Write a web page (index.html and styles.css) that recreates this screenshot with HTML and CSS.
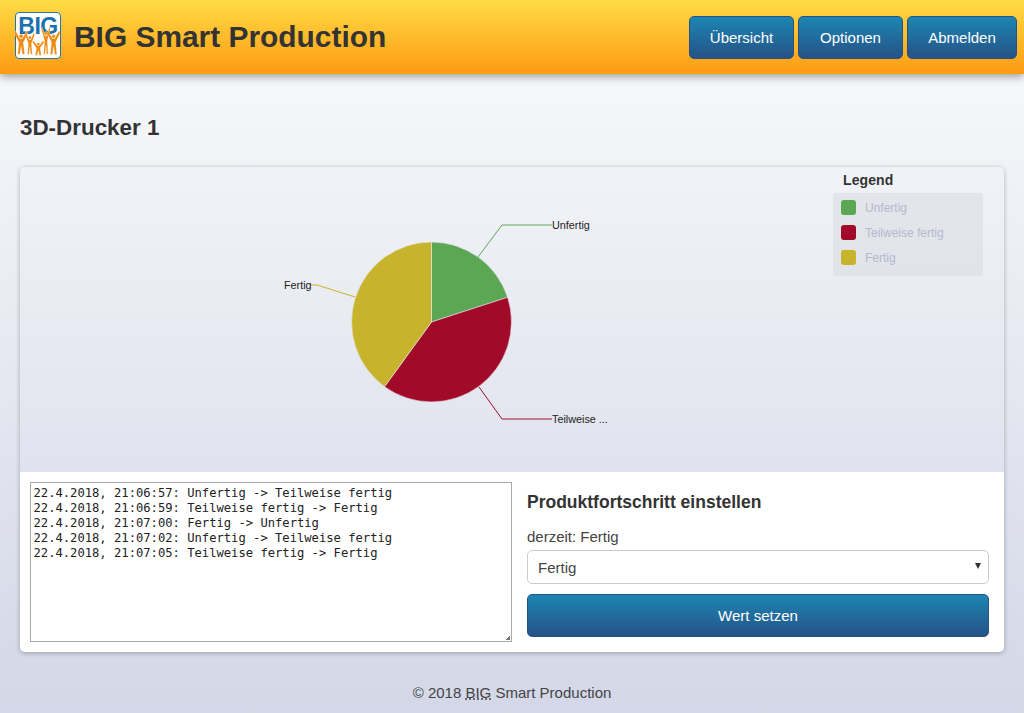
FILE: index.html
```html
<!DOCTYPE html>
<html lang="de">
<head>
    <meta charset="UTF-8">
    <title>BIG Smart Production</title>
    <link rel="stylesheet" href="styles.css">
</head>
<body>
<header class="topbar">
    <div class="brand">
        <div class="logo">
            <span class="logo-text">BIG</span>
            <svg class="logo-people" viewBox="0 0 50 34" aria-hidden="true">
                <defs>
                    <g id="person">
                        <path d="M0 3 L1.5 0 L6.5 10 L9.5 10 L14.5 0 L16 3 L10.5 15 L12 30 L9.5 30 L8 20 L6.5 30 L4 30 L5.5 15 Z"/>
                        <circle cx="8" cy="7" r="2.3"/>
                    </g>
                </defs>
                <use href="#person" transform="translate(0 4) scale(.95 .86)"/>
                <use href="#person" transform="translate(12 6) scale(.65 .8)"/>
                <use href="#person" transform="translate(20 15) scale(.8 .53)"/>
                <use href="#person" transform="translate(30 0) scale(.6 1)"/>
                <use href="#person" transform="translate(36 4) scale(.9 .87)"/>
            </svg>
        </div>
        <h1 class="brand-title">BIG Smart Production</h1>
    </div>
    <nav class="nav">
        <a class="btn nav-btn" href="#">Übersicht</a>
        <a class="btn nav-btn" href="#">Optionen</a>
        <a class="btn nav-btn nav-btn-wide" href="#">Abmelden</a>
    </nav>
</header>

<main class="content">
    <h2 class="page-title">3D-Drucker 1</h2>

    <section class="card">
        <div class="chart">
            <svg class="pie" viewBox="0 0 984 305" width="984" height="305">
                <path class="lead-green" d="M458 90 L482 58"/>
                <path class="lead-green lead-soft" d="M482 58 L532 58"/>
                <path class="lead-red" d="M459 220 L482 252"/>
                <path class="lead-red lead-soft" d="M482 252 L532 252"/>
                <path class="lead-yellow" d="M335 130 L297 118 L291 118"/>

                <g transform="translate(.5 0)">
                    <path class="slice-green" d="M411 155 L411 75 A80 80 0 0 1 487.1 130.3 Z"/>
                    <path class="slice-red" d="M411 155 L487.1 130.3 A80 80 0 0 1 364 219.7 Z"/>
                    <path class="slice-yellow" d="M411 155 L364 219.7 A80 80 0 0 1 411 75 Z"/>
                </g>

                <text class="pie-label" x="532" y="62">Unfertig</text>
                <text class="pie-label" x="532" y="256">Teilweise ...</text>
                <text class="pie-label" x="264" y="122">Fertig</text>
            </svg>

            <div class="legend">
                <div class="legend-title">Legend</div>
                <ul class="legend-list">
                    <li class="legend-item"><span class="swatch swatch-green"></span>Unfertig</li>
                    <li class="legend-item"><span class="swatch swatch-red"></span>Teilweise fertig</li>
                    <li class="legend-item"><span class="swatch swatch-yellow"></span>Fertig</li>
                </ul>
            </div>
        </div>

        <div class="controls">
            <textarea class="log" readonly>22.4.2018, 21:06:57: Unfertig -> Teilweise fertig
22.4.2018, 21:06:59: Teilweise fertig -> Fertig
22.4.2018, 21:07:00: Fertig -> Unfertig
22.4.2018, 21:07:02: Unfertig -> Teilweise fertig
22.4.2018, 21:07:05: Teilweise fertig -> Fertig</textarea>

            <form class="progress-form">
                <h4 class="form-title">Produktfortschritt einstellen</h4>
                <label class="current" for="state">derzeit: Fertig</label>
                <div class="select-wrap">
                    <select class="state-select" id="state">
                        <option>Unfertig</option>
                        <option>Teilweise fertig</option>
                        <option selected>Fertig</option>
                    </select>
                </div>
                <button class="btn submit-btn" type="button">Wert setzen</button>
            </form>
        </div>
    </section>
</main>

<footer class="footer">© 2018 <abbr class="abbr" title="BIG">BIG</abbr> Smart Production</footer>
</body>
</html>
```

FILE: styles.css
```css
* {
    box-sizing: border-box;
}

html, body {
    height: 100%;
}

body {
    margin: 0;
    height: 713px;
    overflow: hidden;
    font-family: "Liberation Sans", Arial, sans-serif;
    color: #333;
    background: linear-gradient(to bottom, #fafbfc 0, #d3d7e7 100%);
}

/* header */
.topbar {
    display: flex;
    justify-content: space-between;
    align-items: center;
    height: 74px;
    padding: 0 7px 0 15px;
    background: linear-gradient(to bottom, #ffdc45 0, #ff9a12 100%);
    box-shadow: 0 3px 8px rgba(0, 0, 0, .35);
}

.brand {
    display: flex;
    align-items: center;
    gap: 13px;
}

.brand-title {
    margin: 0;
    font-size: 29.9px;
    font-weight: bold;
    color: #333;
}

.logo {
    position: relative;
    width: 46px;
    height: 47px;
    margin-bottom: 3px;
    border: 1px solid #1f76ad;
    border-radius: 4px;
    background: #fff;
    text-align: center;
}

.logo-text {
    display: block;
    font-size: 23px;
    font-weight: bold;
    line-height: 27px;
    letter-spacing: -.5px;
    color: #1c70ae;
}

.logo-people {
    position: absolute;
    left: -4px;
    top: 14px;
    width: 50px;
    height: 31px;
    fill: #ee8a10;
    stroke: #fff;
    stroke-width: .3;
}

.nav {
    display: flex;
    gap: 4px;
}

.btn {
    border: 1px solid #265287;
    border-radius: 5px;
    color: #fff;
    font-family: inherit;
    text-decoration: none;
    background: linear-gradient(to bottom, #1c86b2 0, #265287 100%);
}

.nav-btn {
    width: 105px;
    font-size: 15px;
    line-height: 41px;
    text-align: center;
}

.nav-btn-wide {
    width: 110px;
}

/* content */
.content {
    padding: 0 20px;
}

.page-title {
    margin: 0;
    padding-top: 40px;
    height: 93px;
    font-size: 22.4px;
    line-height: 28px;
    font-weight: bold;
}

.card {
    border-radius: 5px;
    box-shadow: 0 1px 5px rgba(0, 0, 0, .28);
    overflow: hidden;
}

.chart {
    position: relative;
    height: 305px;
}

.pie {
    display: block;
}

.slice-green { fill: #5ca753; stroke: #e6e9f1; stroke-width: .6; }
.slice-red { fill: #a10a28; stroke: #e6e9f1; stroke-width: .6; }
.slice-yellow { fill: #c7b42c; stroke: #e6e9f1; stroke-width: .6; }

.lead-green, .lead-red, .lead-yellow {
    fill: none;
    stroke-width: 1;
}

.lead-green { stroke: #5ca753; }
.lead-red { stroke: #a10a28; }
.lead-yellow { stroke: #c7b42c; }

.lead-soft {
    stroke-opacity: .65;
    stroke-width: 1.4;
}

.pie-label {
    font-size: 10.8px;
    fill: #222;
}

.legend {
    position: absolute;
    top: 4px;
    left: 813px;
    width: 150px;
}

.legend-title {
    padding-left: 10px;
    height: 22px;
    font-size: 14px;
    line-height: 18px;
    font-weight: bold;
    letter-spacing: .1px;
}

.legend-list {
    margin: 0;
    padding: 2px 8px 6px;
    height: 83px;
    list-style: none;
    border-radius: 3px;
    background: rgba(212, 214, 221, .45);
}

.legend-item {
    display: flex;
    align-items: center;
    gap: 9px;
    height: 25px;
    font-size: 12px;
    color: #b3bacd;
}

.swatch {
    width: 15px;
    height: 15px;
    border-radius: 3px;
}

.swatch-green { background: #5ca753; }
.swatch-red { background: #a10a28; }
.swatch-yellow { background: #c7b42c; }

.controls {
    display: grid;
    grid-template-columns: 482px 1fr;
    column-gap: 15px;
    height: 180px;
    padding: 10px 15px 10px 10px;
    background: #fff;
}

.log {
    display: block;
    width: 482px;
    height: 160px;
    padding: 3px 2px 2px 2.5px;
    border: 1px solid #a9a9a9;
    font-family: "DejaVu Sans Mono", monospace;
    font-size: 12.17px;
    line-height: 15px;
    color: #222;
    white-space: pre;
}

.log::-webkit-resizer {
    background: linear-gradient(135deg, transparent 50%, #777 50%) no-repeat right 1px bottom 1px / 4px 4px;
}

.progress-form {
    display: flex;
    flex-direction: column;
}

.form-title {
    margin: 10px 0 0;
    height: 36px;
    font-size: 17.5px;
    line-height: 20px;
    font-weight: bold;
}

.current {
    height: 22px;
    font-size: 15px;
    line-height: 18px;
    color: #444;
}

.select-wrap {
    position: relative;
}

/* small solid arrow instead of the browser one */
.select-wrap::after {
    content: "";
    position: absolute;
    top: 13px;
    right: 8px;
    border-top: 6px solid #333;
    border-left: 3px solid transparent;
    border-right: 3px solid transparent;
    pointer-events: none;
}

.state-select {
    display: block;
    width: 100%;
    height: 34px;
    padding: 1px 10px 0;
    border: 1px solid #ccc;
    border-radius: 5px;
    appearance: none;
    font-family: inherit;
    font-size: 15px;
    color: #444;
    background: #fff;
}

.submit-btn {
    height: 43px;
    margin-top: 10px;
    font-size: 15px;
}

.footer {
    margin-top: 32px;
    text-align: center;
    font-size: 15px;
    line-height: 18px;
    color: #444;
}

.abbr {
    text-decoration: underline dotted;
}
```
